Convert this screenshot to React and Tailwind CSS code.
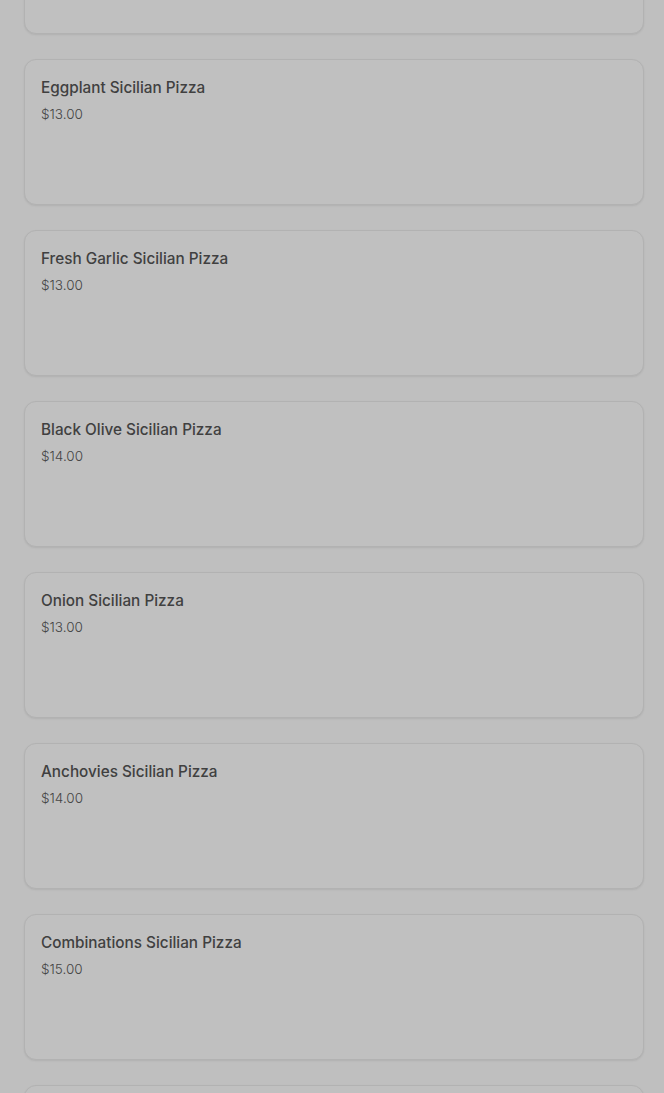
const items = [
    { name: "Plain Sicilian Pizza", price: "$12.00" },
    { name: "Eggplant Sicilian Pizza", price: "$13.00" },
    { name: "Fresh Garlic Sicilian Pizza", price: "$13.00" },
    { name: "Black Olive Sicilian Pizza", price: "$14.00" },
    { name: "Onion Sicilian Pizza", price: "$13.00" },
    { name: "Anchovies Sicilian Pizza", price: "$14.00" },
    { name: "Combinations Sicilian Pizza", price: "$15.00" },
    { name: "Meatball Sicilian Pizza", price: "$15.00" },
];

const MenuCard = ({ name, price }) => (
    <div className="h-[146px] rounded-xl border border-[#b2b2b2] bg-[#c0c0c0] px-4 pt-[18px] shadow-[0_1px_2px_rgba(0,0,0,0.08)]">
        <h3 className="text-[15.3px] font-medium text-[#404040] leading-5">{name}</h3>
        <p className="mt-[6px] text-[13.5px] font-light text-[#454545] leading-5">{price}</p>
    </div>
);

export default function App() {
    return (
        <div
            className="h-[1093px] overflow-hidden bg-[#bfbfbf]"
            style={{ fontFamily: "Inter, 'Noto Sans', sans-serif" }}
        >
            <div className="-mt-[112px] pl-[24px] pr-[20px] flex flex-col gap-[25px]">
                {items.map((item) => (
                    <MenuCard key={item.name} {...item} />
                ))}
            </div>
        </div>
    );
}
